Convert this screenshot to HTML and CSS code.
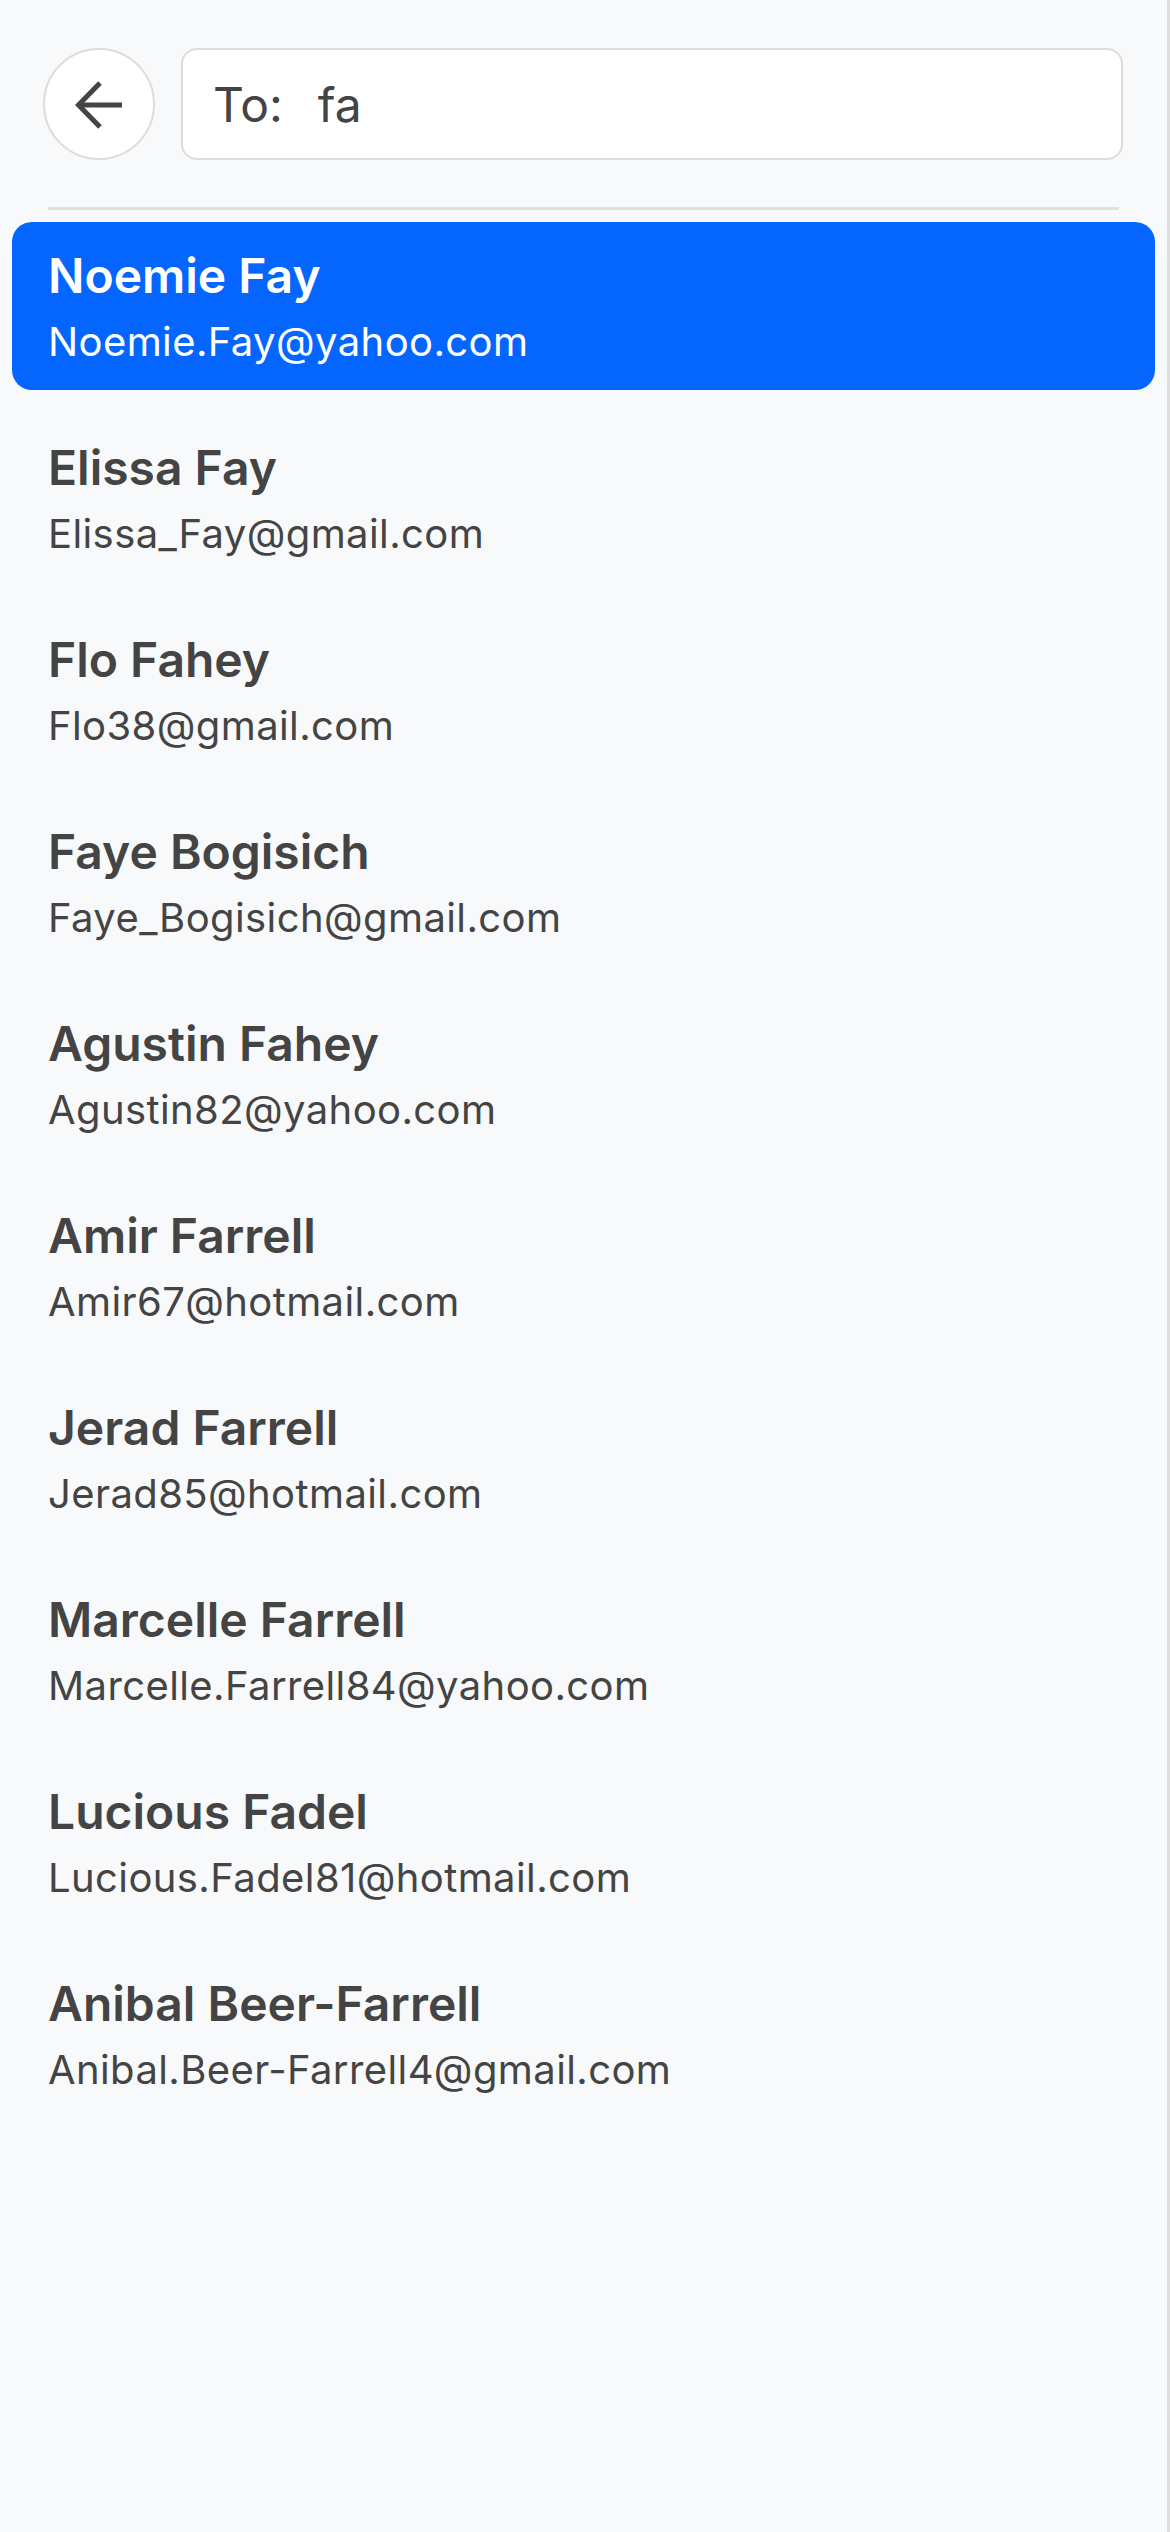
FILE: index.html
```html
<!DOCTYPE html>
<html lang="en">
<head>
<meta charset="utf-8">
<title>Compose - To</title>
<link rel="stylesheet" href="styles.css">
</head>
<body>
<div class="page">
  <header class="header">
    <button class="back" aria-label="Back">
      <svg width="48" height="48" viewBox="0 0 48 48" fill="none" stroke="#444" stroke-width="5" stroke-linejoin="miter" stroke-linecap="butt">
        <path d="M47 24 H5"/>
        <path d="M25 2 L3.5 24 L25 46"/>
      </svg>
    </button>
    <div class="to-field">
      <span class="to-label">To:</span>
      <span class="to-value">fa</span>
    </div>
  </header>
  <div class="separator"></div>
  <ul class="list">
    <li class="item selected"><div class="name">Noemie Fay</div><div class="email">Noemie.Fay@yahoo.com</div></li>
    <li class="item"><div class="name">Elissa Fay</div><div class="email">Elissa_Fay@gmail.com</div></li>
    <li class="item"><div class="name">Flo Fahey</div><div class="email">Flo38@gmail.com</div></li>
    <li class="item"><div class="name">Faye Bogisich</div><div class="email">Faye_Bogisich@gmail.com</div></li>
    <li class="item"><div class="name">Agustin Fahey</div><div class="email">Agustin82@yahoo.com</div></li>
    <li class="item"><div class="name">Amir Farrell</div><div class="email">Amir67@hotmail.com</div></li>
    <li class="item"><div class="name">Jerad Farrell</div><div class="email">Jerad85@hotmail.com</div></li>
    <li class="item"><div class="name">Marcelle Farrell</div><div class="email">Marcelle.Farrell84@yahoo.com</div></li>
    <li class="item"><div class="name">Lucious Fadel</div><div class="email">Lucious.Fadel81@hotmail.com</div></li>
    <li class="item"><div class="name">Anibal Beer-Farrell</div><div class="email">Anibal.Beer-Farrell4@gmail.com</div></li>
  </ul>
</div>
</body>
</html>
```
FILE: styles.css
```css
* { box-sizing: border-box; }

html, body {
  margin: 0;
  padding: 0;
  background: #f8f9fb;
}

body {
  font-family: Inter, "Noto Sans", "Liberation Sans", sans-serif;
  color: #444;
}

.page {
  min-height: 2532px;
  border-right: 3px solid #dedede;
  padding-top: 48px;
}

.header {
  display: flex;
  align-items: center;
  gap: 26px;
  padding: 0 44px 0 43px;
}

.back {
  width: 112px;
  height: 112px;
  flex: 0 0 112px;
  border-radius: 50%;
  border: 2px solid #dcdcdc;
  background: #fff;
  display: flex;
  align-items: center;
  justify-content: center;
  padding: 0;
  margin: 0;
  padding-top: 1px;
}

.back svg { display: block; }

.to-field {
  flex: 1;
  height: 112px;
  background: #fff;
  border: 2px solid #dcdcdc;
  border-radius: 16px;
  display: flex;
  align-items: center;
  gap: 35px;
  padding-left: 30px;
  font-size: 48px;
  color: #444;
}

.separator {
  height: 3px;
  background: #e0e0e2;
  margin: 47px 48px 0 48px;
}

.list {
  list-style: none;
  margin: 12px 0 0 0;
  padding: 0 12px;
  display: flex;
  flex-direction: column;
  gap: 24px;
}

.item {
  padding: 25px 36px 24px 36px;
  border-radius: 20px;
  color: #444;
}

.item.selected {
  background: #0466ff;
  color: #fff;
}

.name {
  font-size: 48px;
  line-height: 58px;
  font-weight: 600;
}

.email {
  font-size: 40px;
  line-height: 48px;
  margin-top: 13px;
  letter-spacing: 0.4px;
}
```
